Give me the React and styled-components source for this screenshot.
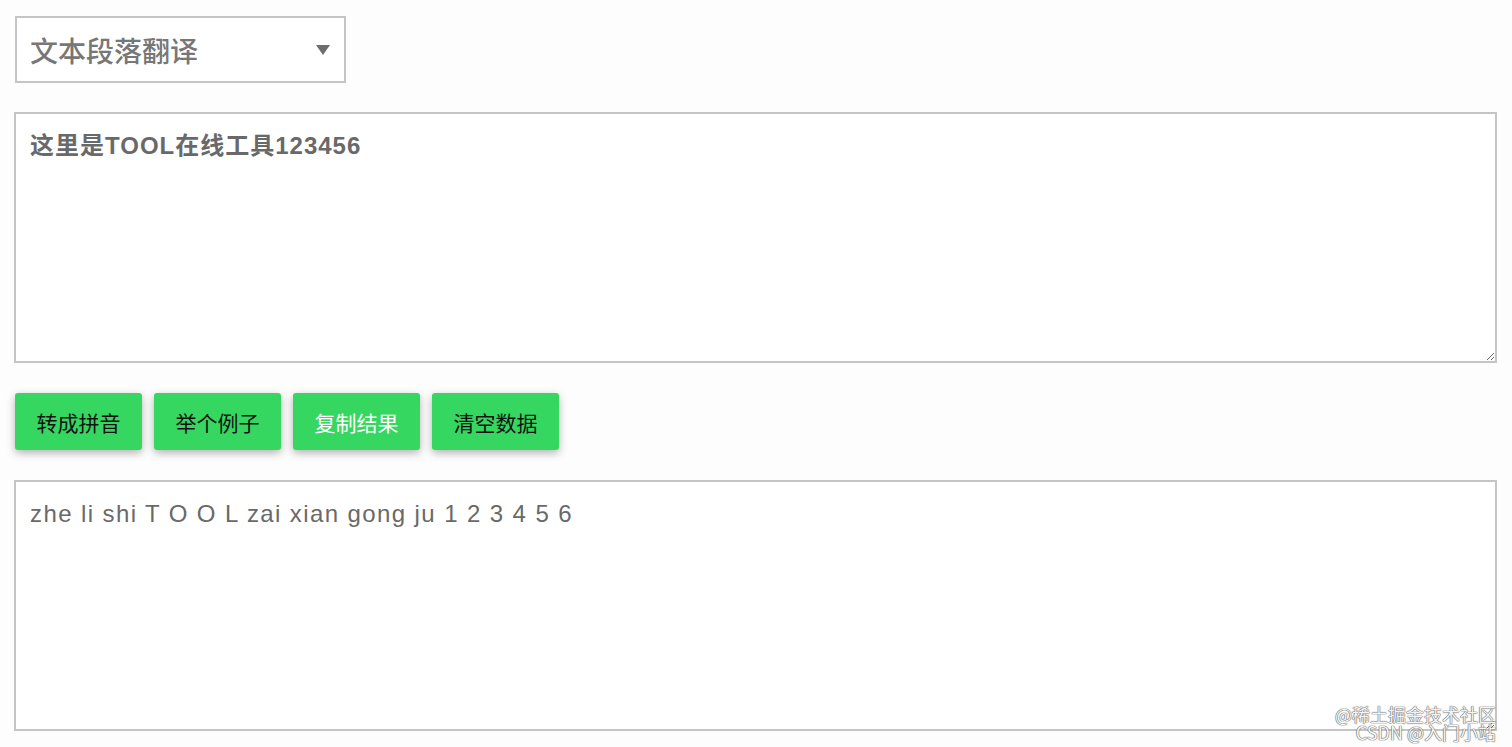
import React, { useState } from 'react'
import styled, { createGlobalStyle } from 'styled-components'

const GlobalStyle = createGlobalStyle`
  html, body {
    margin: 0;
    padding: 0;
    background: #fdfdfd;
  }
  body {
    font-family: "Liberation Sans", "Noto Sans CJK SC", sans-serif;
    color: #666;
  }
`

const Page = styled.div`
  position: relative;
  display: flex;
  flex-direction: column;
  padding: 16px 15px 0 14px;
  height: 747px;
  box-sizing: border-box;
  overflow: hidden;
`

const Select = styled.div`
  display: flex;
  align-items: center;
  justify-content: space-between;
  width: 331px;
  height: 67px;
  margin-left: 1px;
  box-sizing: border-box;
  padding: 0 14px 0 13px;
  border: 2px solid #c4c4c4;
  background: #fff;
  font-family: "Noto Sans CJK SC", sans-serif;
  font-size: 28px;
  font-weight: 500;
  color: #777;
`

const Caret = styled.span`
  width: 0;
  height: 0;
  border-left: 7px solid transparent;
  border-right: 7px solid transparent;
  border-top: 10px solid #6e6e6e;
`

const TextBox = styled.textarea`
  display: block;
  width: 100%;
  height: 251px;
  margin-top: ${p => p.$top}px;
  box-sizing: border-box;
  padding: 16px 14px;
  border: 2px solid #c4c4c4;
  background: #fff;
  font-family: "Liberation Sans", "Noto Sans CJK SC", sans-serif;
  font-size: 24px;
  font-weight: ${p => (p.$bold ? 700 : 400)};
  letter-spacing: ${p => (p.$bold ? 1 : 1.4)}px;
  color: #696969;
  line-height: 1.3;
  resize: vertical;
  outline: none;
`

const Actions = styled.div`
  display: flex;
  gap: 12px;
  margin: 30px 0 0 1px;
`

const Button = styled.button`
  width: 127px;
  height: 57px;
  border: none;
  border-radius: 3px;
  background: #35d760;
  color: ${p => (p.$light ? '#fff' : '#111')};
  font-family: "Noto Sans CJK SC", sans-serif;
  font-size: 21px;
  box-shadow: 0 3px 8px rgba(0, 0, 0, 0.3);
  cursor: pointer;
`

const Watermark = styled.div`
  position: absolute;
  right: 16px;
  bottom: 6px;
  text-align: right;
  font-family: "Noto Sans CJK SC", sans-serif;
  font-size: 18px;
  line-height: 18px;
  color: rgba(255, 255, 255, 0.95);
  text-shadow: 0 0 1px #666, 0 0 1px #666, 0 0 1px #666;
`

export default function App() {
  const [input, setInput] = useState('这里是TOOL在线工具123456')
  const [output, setOutput] = useState(
    'zhe li shi T O O L zai xian gong ju 1 2 3 4 5 6'
  )

  return (
    <Page>
      <GlobalStyle />
      <Select>
        <span>文本段落翻译</span>
        <Caret />
      </Select>
      <TextBox
        $top={29}
        $bold
        value={input}
        onChange={e => setInput(e.target.value)}
      />
      <Actions>
        <Button>转成拼音</Button>
        <Button>举个例子</Button>
        <Button $light>复制结果</Button>
        <Button onClick={() => setInput('')}>清空数据</Button>
      </Actions>
      <TextBox
        $top={30}
        value={output}
        onChange={e => setOutput(e.target.value)}
      />
      <Watermark>
        <div>@稀土掘金技术社区</div>
        <div>CSDN @入门小站</div>
      </Watermark>
    </Page>
  )
}
